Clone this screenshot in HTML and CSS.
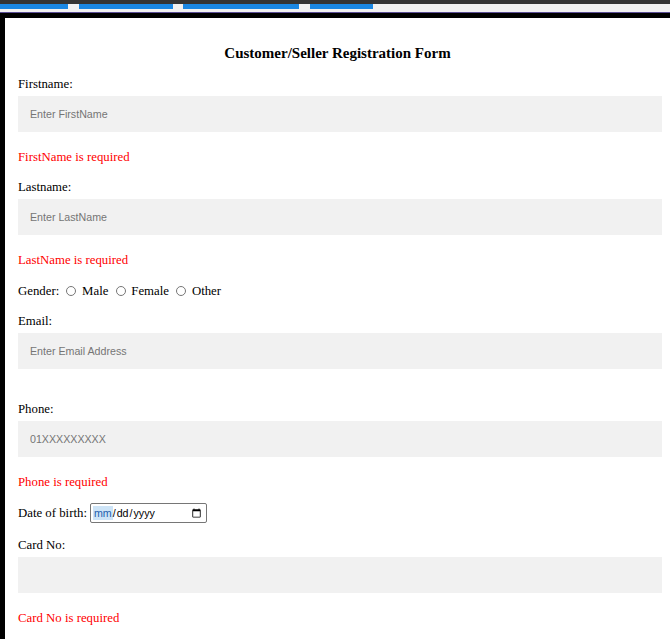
FILE: index.html
```html
<!DOCTYPE html>
<html lang="en">
<head>
<meta charset="utf-8">
<title>Customer/Seller Registration Form</title>
<link rel="stylesheet" href="styles.css">
</head>
<body>
<div class="topbar"></div>
<nav class="tabs">
  <span class="tab t1"></span>
  <span class="tab t2"></span>
  <span class="tab t3"></span>
  <span class="tab t4"></span>
</nav>
<div class="rule"></div>
<form class="form">
  <h3 class="title">Customer/Seller Registration Form</h3>

  <label class="lbl">Firstname:</label>
  <input class="field" type="text" placeholder="Enter FirstName">
  <div class="err">FirstName is required</div>

  <label class="lbl">Lastname:</label>
  <input class="field" type="text" placeholder="Enter LastName">
  <div class="err">LastName is required</div>

  <div class="row gender">Gender: <input class="radio" type="radio" name="g"> Male <input class="radio" type="radio" name="g"> Female <input class="radio" type="radio" name="g"> Other</div>

  <label class="lbl">Email:</label>
  <input class="field" type="text" placeholder="Enter Email Address">
  <div class="err"></div>

  <label class="lbl">Phone:</label>
  <input class="field" type="text" placeholder="01XXXXXXXXX">
  <div class="err">Phone is required</div>

  <div class="row dob">Date of birth: <input class="date" type="date" autofocus></div>

  <label class="lbl">Card No:</label>
  <input class="field" type="text">
  <div class="err">Card No is required</div>
</form>
</body>
</html>
```

FILE: styles.css
```css
html, body {
  margin: 0;
  padding: 0;
  background: #ffffff;
  overflow: hidden;
}
body {
  font-family: "Liberation Serif", "Times New Roman", serif;
  font-size: 12.8px;
  color: #000;
}
.topbar {
  height: 4px;
  background: #343434;
}
.tabs {
  height: 8px;
  background: #f1f1f1;
  display: flex;
  align-items: flex-start;
}
.tab {
  display: block;
  height: 5px;
  background: #1a87e3;
}
.t1 { width: 68px; }
.t2 { width: 94px; margin-left: 11px; }
.t3 { width: 116px; margin-left: 10px; }
.t4 { width: 63px; margin-left: 11px; }
.rule {
  height: 1px;
  background: #5a4d94;
}
.form {
  border-top: 5px solid #000;
  border-left: 5px solid #000;
  padding: 26.5px 8px 0 13px;
}
.title {
  margin: 0 0 15px 0;
  padding-right: 5px;
  font-size: 15px;
  line-height: 17px;
  font-weight: bold;
  text-align: center;
}
.lbl {
  display: block;
  line-height: 15px;
  margin-bottom: 4.5px;
}
.field {
  display: block;
  box-sizing: border-box;
  width: 100%;
  height: 36px;
  padding: 0 12px;
  margin: 0 0 17.5px 0;
  border: none;
  outline: none;
  background: #f1f1f1;
  font-family: "Liberation Sans", Arial, sans-serif;
  font-size: 10.67px;
  color: #000;
}
.field::placeholder {
  color: #757575;
}
.err {
  color: #ff0000;
  line-height: 15px;
  padding-bottom: 15px;
}
.row {
  line-height: 15px;
}
.gender {
  margin-top: 1px;
  margin-bottom: 15px;
}
.radio {
  width: 10px;
  height: 10px;
  margin: 0 2.5px 0 4px;
  vertical-align: -1px;
}
.dob {
  display: flex;
  align-items: center;
  gap: 3px;
  height: 20px;
  margin-top: -1.5px;
  margin-bottom: 14.5px;
}
.date {
  box-sizing: border-box;
  width: 117px;
  height: 20px;
  padding: 1px 2px;
  margin: 0;
  border: 1px solid #767676;
  border-radius: 2px;
  font-family: "Liberation Sans", Arial, sans-serif;
  font-size: 10.67px;
  background: #fff;
  outline: none;
}
.date:focus {
  outline: none;
}
.date::-webkit-datetime-edit-month-field {
  background-color: #cde4f7 !important;
  color: #1f5fae !important;
}
```
